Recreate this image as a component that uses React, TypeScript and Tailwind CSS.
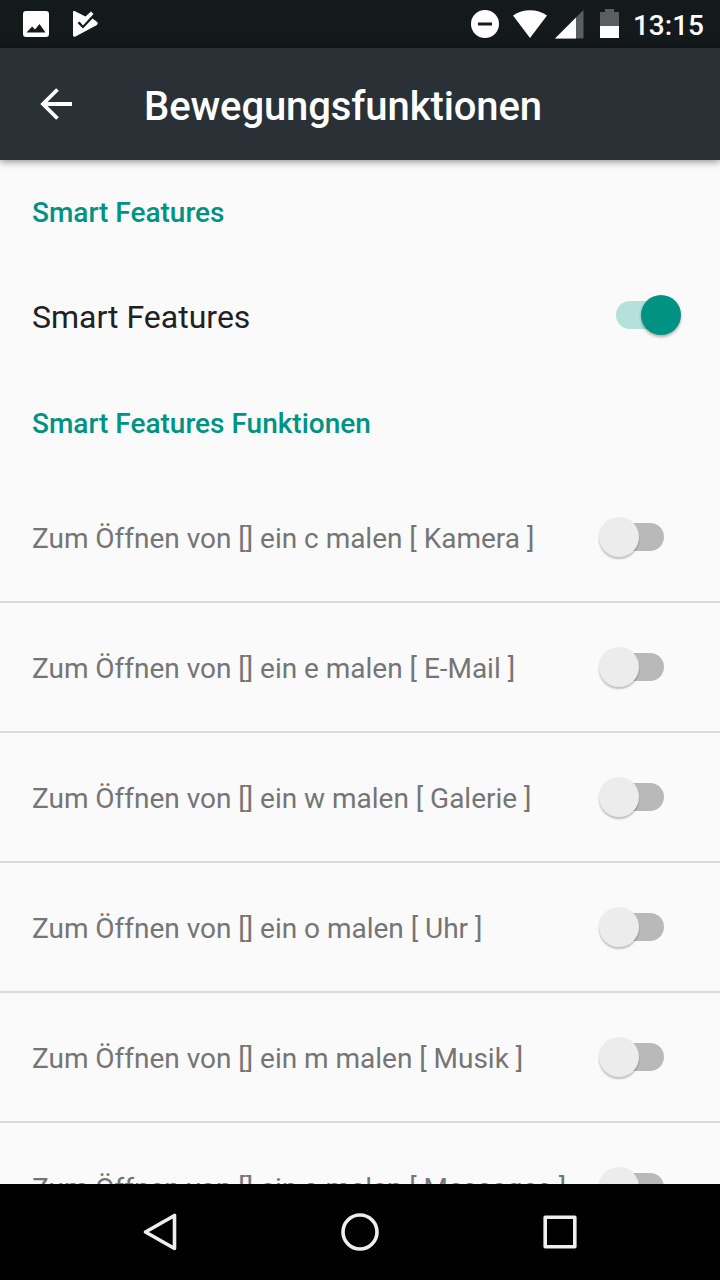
const GESTURES = [
  { letter: 'c', app: 'Kamera' },
  { letter: 'e', app: 'E-Mail' },
  { letter: 'w', app: 'Galerie' },
  { letter: 'o', app: 'Uhr' },
  { letter: 'm', app: 'Musik' },
  { letter: 's', app: 'Messages' },
]

function StatusBar() {
  return (
    <div className="flex h-12 shrink-0 items-center justify-between bg-[#14191c] pl-[23px] pr-4 text-white">
      <div className="flex items-center gap-6">
        <svg width="26" height="26" viewBox="0 0 26 26" fill="currentColor">
          <path fillRule="evenodd" d="M3 0h20a3 3 0 0 1 3 3v20a3 3 0 0 1-3 3H3a3 3 0 0 1-3-3V3a3 3 0 0 1 3-3zM3.500 21.500h19l-6-8.500-4.500 5.500-2.800-3z" />
        </svg>
        <svg width="26" height="28" viewBox="0 0 26 28" fill="currentColor">
          <path d="M0 2.500C0 1 1 .8 2 1.300L12.500 6.500L18 1.500L20.500 4L10 15.500L6.500 11.500L4.500 13L10 18.500L19.500 8.500L23.500 11.500Q26 13.500 23.500 15.200L2.500 26.500Q0 27.500 0 25Z" />
        </svg>
      </div>
      <div className="flex items-center">
        <svg width="160" height="48" viewBox="465 0 160 48" fill="currentColor">
          <path fillRule="evenodd" d="M485 10a14 14 0 1 0 0 28a14 14 0 0 0 0-28zM478 22.500h14v3h-14z" />
          <path d="M513 15.500C523 8.500 537 8.500 547 15.500L530 38Z" />
          <path d="M583.500 10V38.500H555Z" fillOpacity=".3" />
          <path d="M576 17.500V38.500H555Z" />
          <path d="M600 12h5v-3h9v3h5v14h-19z" fillOpacity=".3" />
          <path d="M600 26h19v12h-19z" />
        </svg>
        <span className="ml-2 pt-1 text-[28px] font-medium leading-none">13:15</span>
      </div>
    </div>
  )
}

function Toggle({ on = false }: { on?: boolean }) {
  return on ? (
    <div className="relative mb-1 h-7 w-16 rounded-full bg-[#b6e0db]">
      <div className="absolute -right-px -top-1.5 size-10 rounded-full bg-[#009384] shadow-[0_2px_3px_rgba(0,0,0,0.3)]" />
    </div>
  ) : (
    <div className="relative h-7 w-16 rounded-full bg-[#b9b9b9]">
      <div className="absolute -left-px -top-1.5 size-10 rounded-full bg-[#ececec] shadow-[0_2px_2px_rgba(0,0,0,0.24)]" />
    </div>
  )
}

export default function App() {
  return (
    <div className="flex h-[1280px] w-[720px] flex-col overflow-hidden bg-[#fafafa] font-[Roboto,sans-serif]">
      <StatusBar />
      <header className="z-10 flex h-28 shrink-0 items-center bg-[#293137] pl-10 text-white shadow-[0_1px_8px_rgba(0,0,0,0.5)]">
        <svg width="32" height="32" viewBox="0 0 32 32" fill="none" stroke="currentColor" strokeWidth="3.800">
          <path d="M32 16H3M17.500 1.500L3 16L17.500 30.500" />
        </svg>
        <h1 className="ml-[72px] pt-1.5 text-[40px] font-medium tracking-[-0.1px]">Bewegungsfunktionen</h1>
      </header>
      <main className="min-h-0 flex-1 overflow-hidden">
        <h2 className="flex h-[104px] items-center px-8 pt-0.5 text-[28px] font-medium text-[#009384]">Smart Features</h2>
        <div className="flex h-[106px] items-center justify-between pl-8 pr-10">
          <span className="text-[32px] text-[#212121]">Smart Features</span>
          <Toggle on />
        </div>
        <h2 className="flex h-[103px] items-center px-8 pt-[5px] text-[28px] font-medium text-[#009384]">Smart Features Funktionen</h2>
        {GESTURES.map(g => (
          <div key={g.letter} className="flex h-[130px] items-center justify-between border-b-2 border-[#dadada] pl-8 pr-14">
            <span className="pt-[3px] text-[28px] tracking-[-0.020px] text-[#757575]">Zum Öffnen von [] ein {g.letter} malen [ {g.app} ]</span>
            <Toggle />
          </div>
        ))}
      </main>
      <nav className="flex h-24 shrink-0 items-center justify-center bg-black">
        <svg width="440" height="40" viewBox="140 1212 440 40" fill="none" stroke="#eee" strokeWidth="3.600" strokeLinejoin="round">
          <path d="M145.500 1232L174.500 1215.500V1248.500Z" />
          <circle cx="360" cy="1232" r="17" />
          <path d="M545.200 1217.200h29.600v29.600h-29.600z" />
        </svg>
      </nav>
    </div>
  )
}
